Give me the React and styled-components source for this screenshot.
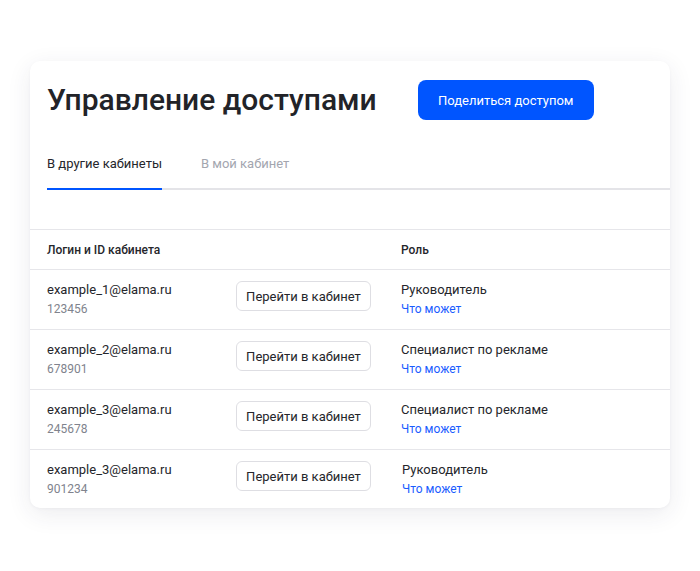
import React from "react";
import styled, { createGlobalStyle } from "styled-components";

const Global = createGlobalStyle`
  html, body { margin: 0; padding: 0; background: #ffffff; }
  body { font-family: Roboto, "Liberation Sans", Arial, sans-serif; color: #25262b; }
  * { box-sizing: border-box; }
`;

const Page = styled.div`
  width: 700px;
  height: 571px;
  padding: 61px 30px 0 30px;
`;

const Card = styled.div`
  background: #fff;
  border-radius: 10px;
  box-shadow: 0 6px 24px rgba(40, 40, 80, 0.09), 0 1px 3px rgba(40, 40, 80, 0.04);
  overflow: hidden;
  height: 447px;
`;

const Header = styled.div`
  display: flex;
  align-items: center;
  gap: 41px;
  padding: 19px 0 0 17px;
`;

const Title = styled.h1`
  margin: 0;
  font-size: 30px;
  font-weight: 500;
  line-height: 40px;
  color: #222328;
`;

const PrimaryButton = styled.button`
  height: 40px;
  width: 176px;
  border: none;
  border-radius: 8px;
  background: #0055ff;
  color: #fff;
  font-family: inherit;
  font-size: 13px;
  cursor: pointer;
`;

const Tabs = styled.div`
  display: flex;
  gap: 39px;
  margin: 34px 0 0 17px;
  border-bottom: 2px solid #e4e4e8;
`;

const Tab = styled.div`
  font-size: 13px;
  line-height: 20px;
  padding-bottom: 14px;
  margin-bottom: -2px;
  color: ${(p) => (p.$active ? "#25262b" : "#a3a6af")};
  border-bottom: 2px solid ${(p) => (p.$active ? "#0055ff" : "transparent")};
`;

const Table = styled.div`
  margin-top: 39px;
  border-top: 1px solid #e6e6ea;
`;

const Row = styled.div`
  display: grid;
  grid-template-columns: 189px 165px 1fr;
  align-items: start;
  padding: ${(p) => (p.$head ? "0 0 0 17px" : "10px 0 0 17px")};
  height: ${(p) => (p.$head ? "40px" : "60px")};
  align-content: ${(p) => (p.$head ? "center" : "start")};
  border-bottom: ${(p) => (p.$last ? "none" : "1px solid #e6e6ea")};
`;

const HeadCell = styled.div`
  font-size: 12px;
  font-weight: 500;
  color: #25262b;
`;

const Cell = styled.div`
  display: flex;
  flex-direction: column;
  padding-left: ${(p) => p.$shift || 0}px;
`;

const Main = styled.span`
  font-size: 13px;
  line-height: 20px;
  color: #25262b;
`;

const Sub = styled.span`
  font-size: 12px;
  line-height: 18px;
  color: #80838d;
`;

const Link = styled.a`
  font-size: 12px;
  line-height: 18px;
  color: #1a5cff;
  text-decoration: none;
`;

const GhostButton = styled.button`
  height: 30px;
  width: 135px;
  margin-top: 1px;
  border: 1px solid #dedee3;
  border-radius: 6px;
  background: #fff;
  color: #25262b;
  font-family: inherit;
  font-size: 13px;
  padding: 0;
  cursor: pointer;
`;

const rows = [
  { email: "example_1@elama.ru", id: "123456", role: "Руководитель" },
  { email: "example_2@elama.ru", id: "678901", role: "Специалист по рекламе" },
  { email: "example_3@elama.ru", id: "245678", role: "Специалист по рекламе" },
  { email: "example_3@elama.ru", id: "901234", role: "Руководитель", shift: 1 },
];

export default function App() {
  return (
    <Page>
      <Global />
      <Card>
        <Header>
          <Title>Управление доступами</Title>
          <PrimaryButton>Поделиться доступом</PrimaryButton>
        </Header>
        <Tabs>
          <Tab $active>В другие кабинеты</Tab>
          <Tab>В мой кабинет</Tab>
        </Tabs>
        <Table>
          <Row $head>
            <HeadCell>Логин и ID кабинета</HeadCell>
            <div />
            <HeadCell>Роль</HeadCell>
          </Row>
          {rows.map((r, i) => (
            <Row key={i} $last={i === rows.length - 1}>
              <Cell>
                <Main>{r.email}</Main>
                <Sub>{r.id}</Sub>
              </Cell>
              <div>
                <GhostButton>Перейти в кабинет</GhostButton>
              </div>
              <Cell $shift={r.shift}>
                <Main>{r.role}</Main>
                <Link href="#">Что может</Link>
              </Cell>
            </Row>
          ))}
        </Table>
      </Card>
    </Page>
  );
}
